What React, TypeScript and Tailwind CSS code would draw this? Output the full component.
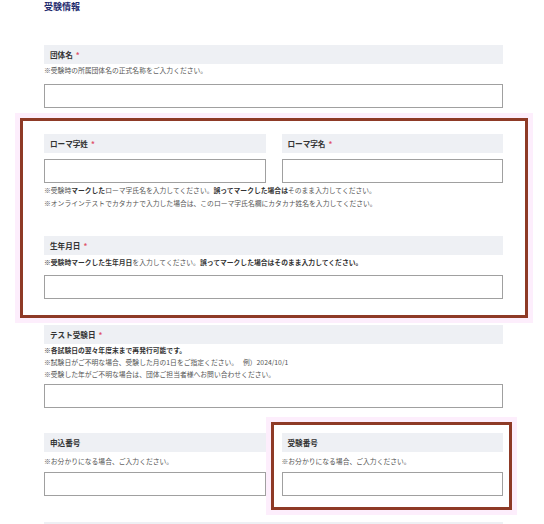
import React from "react";

const Label = ({ text, req }: { text: string; req?: boolean }) => (
  <div className="h-[19px] bg-[#eef0f4] pl-[6px] text-[7.6px] leading-[19px] font-bold text-[#333]">
    {text}
    {req && <span className="ml-[3px] text-[#e0526a]">*</span>}
  </div>
);

const Input = () => <div className="h-[24px] border border-[#a0a0a0] bg-white" />;

export default function App() {
  return (
    <div
      className="w-[544px] h-[524px] overflow-hidden bg-white pl-[44px] pr-[41px]"
      style={{ fontFamily: '"Noto Sans CJK JP", "Noto Sans", sans-serif' }}
    >
      <div className="text-[9px] leading-[14px] font-bold text-[#1e2a6e]">受験情報</div>

      <div className="mt-[31px]">
        <Label text="団体名" req />
        <div className="text-[6.8px] leading-[12px] text-[#555]">※受験時の所属団体名の正式名称をご入力ください。</div>
        <div className="mt-[8px]">
          <Input />
        </div>
      </div>

      <div className="mt-[10px] -ml-[24px] -mr-[25px] border-[3px] border-[#8e3a26] pl-[21px] pr-[22px] pt-[13px] pb-[16px] shadow-[0_0_0_5px_#fdeefc]">
        <div className="grid grid-cols-2 gap-x-[16px]">
          <div>
            <Label text="ローマ字姓" req />
            <div className="mt-[6px]">
              <Input />
            </div>
          </div>
          <div>
            <Label text="ローマ字名" req />
            <div className="mt-[6px]">
              <Input />
            </div>
          </div>
        </div>
        <div className="mt-[1px] text-[6.8px] leading-[13px] text-[#555] whitespace-nowrap">
          <div>
            ※受験時<span className="font-bold text-[#333]">マークした</span>ローマ字氏名を入力してください。
            <span className="font-bold text-[#333]">誤ってマークした場合は</span>そのまま入力してください。
          </div>
          <div>※オンラインテストでカタカナで入力した場合は、このローマ字氏名欄にカタカナ姓名を入力してください。</div>
        </div>

        <div className="mt-[26px]">
          <Label text="生年月日" req />
          <div className="mt-[1px] text-[6.8px] leading-[13px] font-bold text-[#333] whitespace-nowrap">
            ※受験時マークした生年月日<span className="font-normal text-[#555]">を入力してください。</span>誤ってマークした場合はそのまま入力してください。
          </div>
          <div className="mt-[6px]">
            <Input />
          </div>
        </div>
      </div>

      <div className="mt-[7px]">
        <Label text="テスト受験日" req />
        <div className="text-[6.8px] leading-[12px] text-[#555] whitespace-nowrap">
          <div className="font-bold text-[#333]">※各試験日の翌々年度末まで再発行可能です。</div>
          <div>※試験日がご不明な場合、受験した月の1日をご指定ください。　 例）2024/10/1</div>
          <div>※受験した年がご不明な場合は、団体ご担当者様へお問い合わせください。</div>
        </div>
        <div className="mt-[4px]">
          <Input />
        </div>
      </div>

      <div className="mt-[25px] grid grid-cols-2 gap-x-[16px]">
        <div>
          <Label text="申込番号" />
          <div className="mt-[3px] text-[6.8px] leading-[12px] text-[#555]">※お分かりになる場合、ご入力ください。</div>
          <div className="mt-[5px]">
            <Input />
          </div>
        </div>
        <div className="relative">
          <Label text="受験番号" />
          <div className="mt-[3px] text-[6.8px] leading-[12px] text-[#555]">※お分かりになる場合、ご入力ください。</div>
          <div className="mt-[5px]">
            <Input />
          </div>
          <div className="pointer-events-none absolute -left-[11px] -top-[11px] -right-[9px] -bottom-[14px] border-[3px] border-[#8e3a26] shadow-[0_0_0_5px_#fdeefc]" />
        </div>
      </div>

      <div className="mt-[26px] h-[19px] bg-[#eef0f4]" />
    </div>
  );
}
